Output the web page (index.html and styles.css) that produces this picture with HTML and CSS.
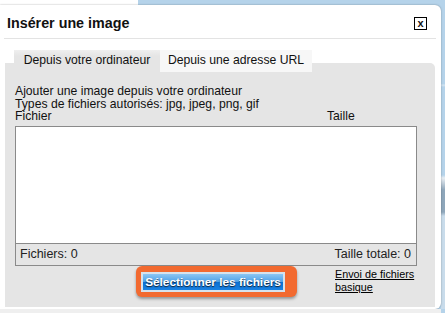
FILE: index.html
```html
<!DOCTYPE html>
<html lang="fr">
<head>
  <meta charset="UTF-8">
  <title>Insérer une image</title>
  <link rel="stylesheet" href="styles.css">
</head>
<body>

  <!-- Image upload dialog -->
  <div class="dialog">
    <div class="dialog-head">
      <h1>Insérer une image</h1>
      <span class="close">x</span>
    </div>

    <!-- Tabs -->
    <div class="tabs">
      <span class="tab active">Depuis votre ordinateur</span>
      <span class="tab">Depuis une adresse URL</span>
    </div>

    <div class="panel">
      <p>Ajouter une image depuis votre ordinateur</p>
      <p>Types de fichiers autorisés: jpg, jpeg, png, gif</p>
      <div class="cols">
        <span>Fichier</span>
        <span>Taille</span>
      </div>

      <!-- File queue -->
      <div class="filebox">
        <div class="filelist"></div>
        <div class="filefoot">
          <span>Fichiers: 0</span>
          <span>Taille totale: 0</span>
        </div>
      </div>

      <div class="actions">
        <div class="highlight">
          <button class="select-btn">Sélectionner les fichiers</button>
        </div>
        <a href="#" class="basic-link">Envoi de fichiers<br>basique</a>
      </div>
    </div>
  </div>

</body>
</html>
```

FILE: styles.css
```css
body {
  margin: 0;
  font-family: "Liberation Sans", Arial, sans-serif;
  color: #111;
  background:
    linear-gradient(#fff, #fff) 0 0 / 138px 5px no-repeat,
    linear-gradient(#efefef, #efefef) 0 309px / 441px 4px no-repeat,
    linear-gradient(#b5d3ea 0, #b5d3ea 84px, #d6e6f2 85px, #b5d3ea 87px, #b5d3ea 175px, #e8eef3 178px, #8ea6ba 190px, #8ea6ba 212px, #c9dceb 216px) 441px 0 / 4px 100% no-repeat,
    #b5d3ea;
}

.dialog {
  width: 441px;
  height: 304px;
  margin-top: 5px;
  background: #fff;
  border-radius: 0 6px 6px 0;
  box-shadow: 0 0 2px rgba(0, 0, 0, 0.35);
}

.dialog-head {
  height: 30px;
  padding: 3px 9px 0 3px;
  margin: 0 5px 0 4px;
  border-bottom: 1px solid #e3e3e3;
  display: flex;
  align-items: center;
  justify-content: space-between;
}

.dialog-head h1 {
  margin: 0;
  font-size: 14.3px;
  font-weight: bold;
}

.close {
  width: 11px;
  height: 11px;
  border: 1px solid #000;
  font-size: 11px;
  font-weight: bold;
  line-height: 10px;
  text-align: center;
}

/* Tabs sit above the grey panel */
.tabs {
  position: relative;
  z-index: 1;
  display: flex;
  margin: 11px 0 0 14px;
  font-size: 12.2px;
}

.tab {
  width: 152px;
  height: 22px;
  line-height: 21px;
  text-align: center;
  background: #f7f7f7;
}

.tab.active {
  width: 146px;
  background: linear-gradient(#efefef, #e5e5e5 6px);
}

.panel {
  height: 244px;
  box-sizing: border-box;
  margin: -9px 6px 0 5px;
  padding: 22px 0 0 10px;
  background: #e5e5e5;
  border-radius: 0 5px 0 0;
  font-size: 12.2px;
  line-height: 12.5px;
}

.panel p {
  margin: 0;
}

.cols {
  display: grid;
  grid-template-columns: 312px auto;
}

.filebox {
  width: 402px;
  margin-top: 3px;
  border: 1px solid #8a8a8a;
  box-sizing: border-box;
}

.filelist {
  height: 116px;
  background: #fff;
  border-bottom: 1px solid #8a8a8a;
}

.filefoot {
  height: 21px;
  padding: 0 5px 0 4px;
  display: flex;
  align-items: center;
  justify-content: space-between;
  color: #222;
  font-size: 12.5px;
}

.actions {
  display: flex;
  align-items: flex-start;
  margin-left: 121px;
}

/* Orange highlight around the button */
.highlight {
  padding: 6px 12px 5px 5px;
  background: #f26a30;
  border-radius: 6px;
  box-shadow: 0 2px 3px rgba(0, 0, 0, 0.35);
}

.select-btn {
  display: block;
  width: 144px;
  height: 20px;
  padding: 0;
  border: 2px solid #d6e2ec;
  background: linear-gradient(#8cc6f2, #4fa2e8 48%, #0b6fd2 52%, #1a82e2);
  color: #fff;
  font-family: "Liberation Sans", Arial, sans-serif;
  font-size: 11.8px;
  font-weight: bold;
  text-shadow: 0 1px 1px #123;
}

.basic-link {
  margin: 2px 0 0 38px;
  color: #000;
  font-size: 10.8px;
  line-height: 13px;
}
```
